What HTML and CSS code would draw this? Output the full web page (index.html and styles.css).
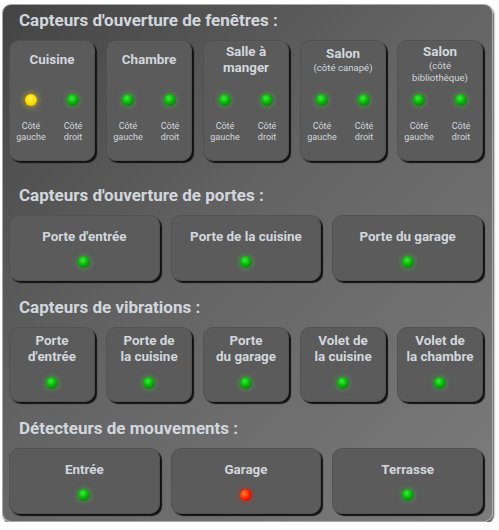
FILE: index.html
```html
<!DOCTYPE html>
<html>
    <head>
        <title>Capteurs</title>
        <link rel="stylesheet" href="styles.css">
    </head>
    <body>
        <div class="panel">
            <section class="group group-first">
                <h2>Capteurs d'ouverture de fenêtres :</h2>
                <div class="cards cols-5">
                    <div class="card card-window">
                        <div class="title"><span>Cuisine</span></div>
                        <div class="pair">
                            <div class="side"><span class="led yellow"></span><span class="lbl">Côté<br>gauche</span></div>
                            <div class="side"><span class="led"></span><span class="lbl">Côté<br>droit</span></div>
                        </div>
                    </div>
                    <div class="card card-window">
                        <div class="title"><span>Chambre</span></div>
                        <div class="pair">
                            <div class="side"><span class="led"></span><span class="lbl">Côté<br>gauche</span></div>
                            <div class="side"><span class="led"></span><span class="lbl">Côté<br>droit</span></div>
                        </div>
                    </div>
                    <div class="card card-window">
                        <div class="title"><span>Salle à<br>manger</span></div>
                        <div class="pair">
                            <div class="side"><span class="led"></span><span class="lbl">Côté<br>gauche</span></div>
                            <div class="side"><span class="led"></span><span class="lbl">Côté<br>droit</span></div>
                        </div>
                    </div>
                    <div class="card card-window">
                        <div class="title"><span>Salon</span><small>(côté canapé)</small></div>
                        <div class="pair">
                            <div class="side"><span class="led"></span><span class="lbl">Côté<br>gauche</span></div>
                            <div class="side"><span class="led"></span><span class="lbl">Côté<br>droit</span></div>
                        </div>
                    </div>
                    <div class="card card-window">
                        <div class="title"><span>Salon</span><small>(côté<br>bibliothèque)</small></div>
                        <div class="pair">
                            <div class="side"><span class="led"></span><span class="lbl">Côté<br>gauche</span></div>
                            <div class="side"><span class="led"></span><span class="lbl">Côté<br>droit</span></div>
                        </div>
                    </div>
                </div>
            </section>

            <section class="group">
                <h2>Capteurs d'ouverture de portes :</h2>
                <div class="cards cols-3">
                    <div class="card card-wide"><div class="name">Porte d'entrée</div><span class="led"></span></div>
                    <div class="card card-wide"><div class="name">Porte de la cuisine</div><span class="led"></span></div>
                    <div class="card card-wide"><div class="name">Porte du garage</div><span class="led"></span></div>
                </div>
            </section>

            <section class="group">
                <h2>Capteurs de vibrations :</h2>
                <div class="cards cols-5">
                    <div class="card card-small"><div class="name">Porte<br>d'entrée</div><span class="led"></span></div>
                    <div class="card card-small"><div class="name">Porte de<br>la cuisine</div><span class="led"></span></div>
                    <div class="card card-small"><div class="name">Porte<br>du garage</div><span class="led"></span></div>
                    <div class="card card-small"><div class="name">Volet de<br>la cuisine</div><span class="led"></span></div>
                    <div class="card card-small"><div class="name">Volet de<br>la chambre</div><span class="led"></span></div>
                </div>
            </section>

            <section class="group">
                <h2>Détecteurs de mouvements :</h2>
                <div class="cards cols-3">
                    <div class="card card-wide"><div class="name">Entrée</div><span class="led"></span></div>
                    <div class="card card-wide"><div class="name">Garage</div><span class="led red"></span></div>
                    <div class="card card-wide"><div class="name">Terrasse</div><span class="led"></span></div>
                </div>
            </section>
        </div>
    </body>
</html>
```

FILE: styles.css
```css
* {
    margin: 0;
    padding: 0;
    box-sizing: border-box;
}

body {
    margin: 4px 0 0 2px;
    background: #fff;
    font-family: Roboto, 'Liberation Sans', sans-serif;
    color: #d2d7de;
}

.panel {
    width: 491px;
    padding: 5px 9px 7px 6px;
    border: 1px solid #a8a8a8;
    border-radius: 9px;
    background: linear-gradient(135deg, #444 0%, #646464 45%, #7c7c7c 100%);
    box-shadow: 1px 2px 2px rgba(0, 0, 0, 0.7);
}

h2 {
    font-size: 17px;
    line-height: 20px;
    font-weight: 700;
    padding-left: 10px;
    margin-bottom: 10px;
}

.group {
    margin-top: 16px;
}
.group-first {
    margin-top: 0;
    margin-bottom: 24px;
}

.cards {
    display: grid;
}
.cols-5 {
    grid-template-columns: repeat(5, 1fr);
    gap: 11px;
}
.cols-3 {
    grid-template-columns: repeat(3, 1fr);
    gap: 11px;
}

.card {
    display: flex;
    flex-direction: column;
    align-items: center;
    background: #5b5b5b;
    border: 1px solid #525252;
    border-radius: 10px;
    box-shadow: 2px 2px 1px #121212;
    text-align: center;
}

.name, .title span {
    font-size: 13.4px;
    line-height: 16px;
    font-weight: 700;
}

/* fenetres */
.card-window {
    padding: 3px 0 17px;
}
.title {
    height: 32px;
    display: flex;
    flex-direction: column;
    justify-content: safe center;
}
.title small {
    font-size: 9.6px;
    line-height: 12px;
}
.pair {
    margin-top: 18px;
    display: grid;
    grid-template-columns: 42px 42px;
}
.side {
    display: flex;
    flex-direction: column;
    align-items: center;
    gap: 15px;
}
.lbl {
    font-size: 9px;
    line-height: 11px;
}

/* portes + mouvements */
.card-wide {
    padding: 13px 0 12px;
    gap: 11px;
}

/* vibrations */
.card-small {
    padding: 5px 0 12px;
    gap: 12px;
}

.led {
    display: block;
    width: 12px;
    height: 12px;
    border-radius: 50%;
    background: radial-gradient(circle at 40% 35%, #3cf03c 0%, #0cb80c 40%, #046404 100%);
    box-shadow: 0 0 6px rgba(60, 230, 60, 0.55);
}
.led.yellow {
    background: radial-gradient(circle at 45% 40%, #fff25a 0%, #ffe000 45%, #e8b000 100%);
    box-shadow: 0 0 7px rgba(255, 220, 0, 0.75);
}
.led.red {
    background: radial-gradient(circle at 35% 40%, #ff8a2a 0%, #ff2200 45%, #b00000 100%);
    box-shadow: 0 0 6px rgba(255, 30, 0, 0.6);
}
```
